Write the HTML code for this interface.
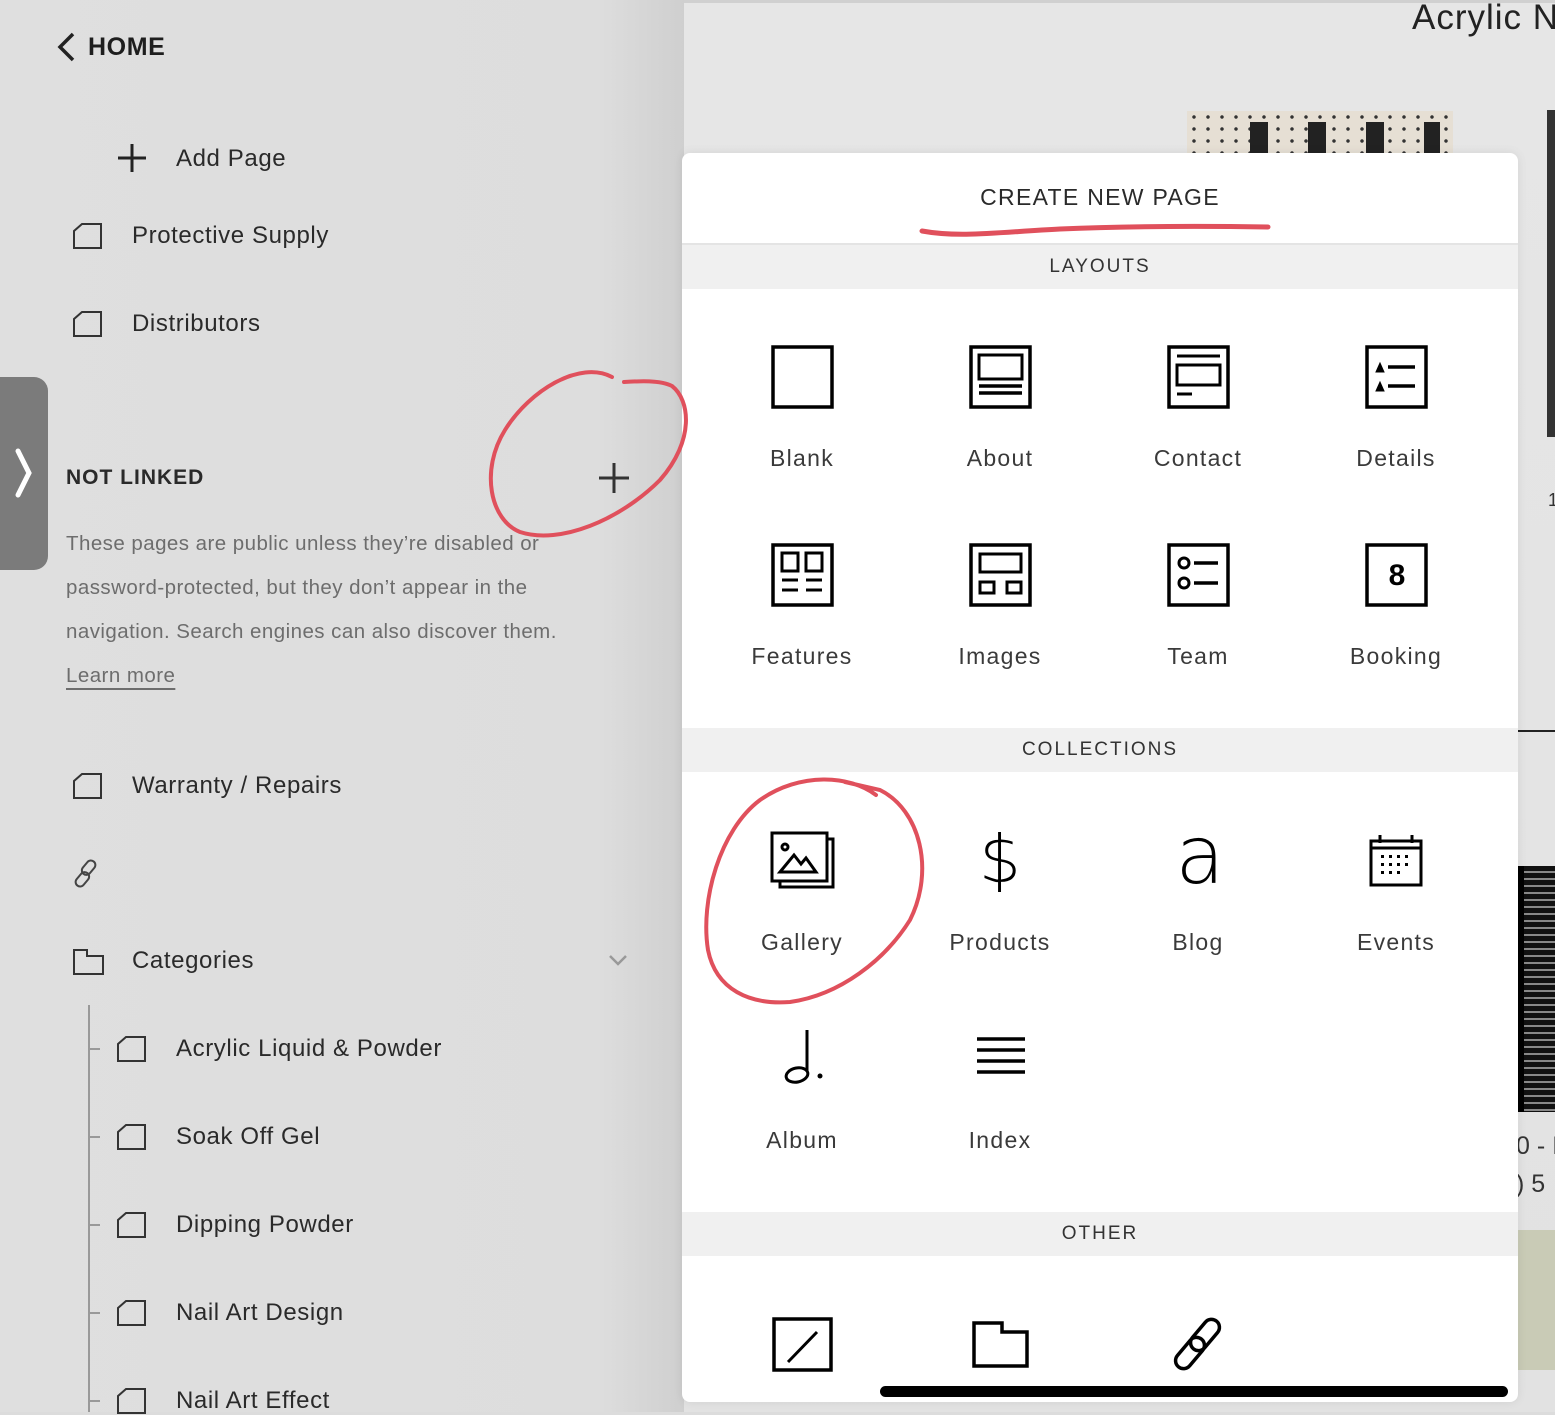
<!DOCTYPE html>
<html><head><meta charset="utf-8"><style>
*{margin:0;padding:0;box-sizing:border-box}
body{width:1555px;height:1412px;overflow:hidden;background:#dcdcdc;font-family:"Liberation Sans",sans-serif;position:relative}
.a{position:absolute}
.t{color:#2a2a2a;font-size:24px;letter-spacing:.6px}
.lbl{position:absolute;width:200px;text-align:center;font-size:23px;color:#3a3a3a;letter-spacing:1.3px}
.band{position:absolute;left:0;width:836px;height:44px;background:#f0f0f0;text-align:center;line-height:44px;font-size:19px;letter-spacing:2px;color:#333}
svg{position:absolute;overflow:visible}
</style></head><body>
<!-- left panel -->
<div class="a" style="left:0;top:0;width:684px;height:1412px;background:linear-gradient(90deg,#dfdfdf 0,#dddddd 88%,#cfcfcf 100%)"></div>
<svg style="left:55px;top:32px" width="20" height="30"><path d="M18 2 L5 15 L18 28" fill="none" stroke="#222" stroke-width="3.5"/></svg>
<div class="a" style="left:88px;top:33px;font-size:25px;font-weight:bold;color:#1e1e1e;letter-spacing:.6px">HOME</div>
<svg style="left:117px;top:143px" width="30" height="30"><path d="M15 1V29M1 15H29" stroke="#222" stroke-width="3"/></svg>
<div class="a t" style="left:176px;top:145px">Add Page</div>
<svg style="left:73px;top:222px" width="30" height="28"><path d="M1 26H28V2H9L1 9Z" fill="none" stroke="#333" stroke-width="2"/></svg>
<div class="a t" style="left:132px;top:222px">Protective Supply</div>
<svg style="left:73px;top:310px" width="30" height="28"><path d="M1 26H28V2H9L1 9Z" fill="none" stroke="#333" stroke-width="2"/></svg>
<div class="a t" style="left:132px;top:310px">Distributors</div>
<div class="a" style="left:0;top:377px;width:48px;height:193px;background:#7b7b7b;border-radius:0 14px 14px 0"></div>
<svg style="left:14px;top:448px" width="20" height="50"><path d="M4 3L15 25L4 47" fill="none" stroke="#fff" stroke-width="5" stroke-linecap="round"/></svg>
<div class="a" style="left:66px;top:466px;font-size:21px;font-weight:bold;color:#2a2a2a;letter-spacing:1px">NOT LINKED</div>
<svg style="left:598px;top:462px" width="32" height="32"><path d="M16 1V31M1 16H31" stroke="#333" stroke-width="3"/></svg>
<div class="a" style="left:66px;top:522px;width:620px;font-size:20.5px;line-height:44px;color:#6d6d6d;letter-spacing:.45px;white-space:nowrap">These pages are public unless they’re disabled or<br>password-protected, but they don’t appear in the<br>navigation. Search engines can also discover them.<br><span style="text-decoration:underline;text-underline-offset:6px">Learn more</span></div>
<svg style="left:73px;top:772px" width="30" height="28"><path d="M1 26H28V2H9L1 9Z" fill="none" stroke="#333" stroke-width="2"/></svg>
<div class="a t" style="left:132px;top:772px">Warranty / Repairs</div>
<svg style="left:74px;top:858px" width="30" height="32"><g fill="none" stroke="#444" stroke-width="2"><rect x="10" y="2" width="9" height="16" rx="4.5" transform="rotate(40 15 10)"/><rect x="4" y="13" width="9" height="16" rx="4.5" transform="rotate(40 8 21)"/></g></svg>
<svg style="left:73px;top:948px" width="32" height="28"><path d="M1 26H30V8H14V2H1Z" fill="none" stroke="#333" stroke-width="2"/></svg>
<div class="a t" style="left:132px;top:947px">Categories</div>
<svg style="left:608px;top:954px" width="20" height="14"><path d="M2 2L10 10L18 2" fill="none" stroke="#999" stroke-width="2.5"/></svg>
<div class="a" style="left:88px;top:1005px;width:2px;height:407px;background:#999"></div>
<div class="a" style="left:90px;top:1048px;width:10px;height:2px;background:#999"></div>
<div class="a" style="left:90px;top:1136px;width:10px;height:2px;background:#999"></div>
<div class="a" style="left:90px;top:1224px;width:10px;height:2px;background:#999"></div>
<div class="a" style="left:90px;top:1312px;width:10px;height:2px;background:#999"></div>
<div class="a" style="left:90px;top:1400px;width:10px;height:2px;background:#999"></div>
<svg style="left:117px;top:1035px" width="30" height="28"><path d="M1 26H28V2H9L1 9Z" fill="none" stroke="#333" stroke-width="2"/></svg>
<div class="a t" style="left:176px;top:1035px">Acrylic Liquid &amp; Powder</div>
<svg style="left:117px;top:1123px" width="30" height="28"><path d="M1 26H28V2H9L1 9Z" fill="none" stroke="#333" stroke-width="2"/></svg>
<div class="a t" style="left:176px;top:1123px">Soak Off Gel</div>
<svg style="left:117px;top:1211px" width="30" height="28"><path d="M1 26H28V2H9L1 9Z" fill="none" stroke="#333" stroke-width="2"/></svg>
<div class="a t" style="left:176px;top:1211px">Dipping Powder</div>
<svg style="left:117px;top:1299px" width="30" height="28"><path d="M1 26H28V2H9L1 9Z" fill="none" stroke="#333" stroke-width="2"/></svg>
<div class="a t" style="left:176px;top:1299px">Nail Art Design</div>
<svg style="left:117px;top:1387px" width="30" height="28"><path d="M1 26H28V2H9L1 9Z" fill="none" stroke="#333" stroke-width="2"/></svg>
<div class="a t" style="left:176px;top:1387px">Nail Art Effect</div>

<!-- right preview -->
<div class="a" style="left:684px;top:0;width:871px;height:1412px;background:linear-gradient(180deg,#e6e6e6 0,#e2e2e2 100%)"></div>
<div class="a" style="left:684px;top:0;width:871px;height:3px;background:#d0d0d0"></div>
<div class="a" style="left:1412px;top:-2px;font-size:35px;color:#222;white-space:nowrap;letter-spacing:1px">Acrylic N</div>
<div class="a" style="left:1187px;top:111px;width:266px;height:42px;background:radial-gradient(circle,#333 1.5px,transparent 2px) 0 0/14px 12px,#e6dfd4"></div>
<div class="a" style="left:1210px;top:122px;width:230px;height:31px;background:repeating-linear-gradient(90deg,transparent 0 40px,#222 40px 58px)"></div>
<div class="a" style="left:1547px;top:110px;width:8px;height:327px;background:#333"></div>
<div class="a" style="left:1518px;top:730px;width:37px;height:2px;background:#222"></div>
<div class="a" style="left:1518px;top:866px;width:37px;height:246px;background:repeating-linear-gradient(180deg,#111 0 5px,#888 5px 7px)"></div>
<div class="a" style="left:1518px;top:866px;width:6px;height:246px;background:#000"></div>
<div class="a" style="left:1516px;top:1132px;font-size:25px;color:#333;white-space:nowrap">0 - I</div>
<div class="a" style="left:1516px;top:1170px;font-size:25px;color:#333;white-space:nowrap">) 5</div>
<div class="a" style="left:1518px;top:1230px;width:37px;height:140px;background:#c9cbb6"></div>
<div class="a" style="left:1548px;top:490px;font-size:18px;color:#333">1</div>

<!-- modal -->
<div class="a" style="left:682px;top:153px;width:836px;height:1249px;background:#fff;border-radius:8px;box-shadow:0 0 10px rgba(0,0,0,.08);overflow:hidden">
<div class="a" style="left:0;top:31px;width:836px;text-align:center;font-size:23px;letter-spacing:1.3px;color:#2a2a2a">CREATE NEW PAGE</div>
<div class="a" style="left:0;top:90px;width:836px;height:2px;background:#e4e4e4"></div>
<div class="band" style="top:92px">LAYOUTS</div>
<div class="band" style="top:575px">COLLECTIONS</div>
<div class="band" style="top:1059px">OTHER</div>
<div class="a" style="left:198px;top:1233px;width:628px;height:11px;background:#000;border-radius:6px"></div>
</div>

<!-- layout icons -->
<svg style="left:771px;top:345px" width="64" height="64" fill="none" stroke="#000" stroke-width="3.5"><rect x="2" y="2" width="59" height="60"/></svg>
<svg style="left:969px;top:345px" width="64" height="64" fill="none" stroke="#000" stroke-width="3.5"><rect x="2" y="2" width="59" height="60"/><rect x="10" y="10" width="43" height="24" stroke-width="3"/><path d="M10 41H53M10 48H53" stroke-width="3.5"/></svg>
<svg style="left:1167px;top:345px" width="64" height="64" fill="none" stroke="#000" stroke-width="3.5"><rect x="2" y="2" width="59" height="60"/><path d="M10 11H53" stroke-width="3"/><rect x="10" y="20" width="43" height="20" stroke-width="3"/><path d="M10 49H25" stroke-width="3"/></svg>
<svg style="left:1365px;top:345px" width="64" height="64" fill="none" stroke="#000" stroke-width="3.5"><rect x="2" y="2" width="59" height="60"/><path d="M11 27L15 18L19 27Z M11 46L15 37L19 46Z" fill="#000" stroke-width="1"/><path d="M23 22H50M23 41H50" stroke-width="3.5"/></svg>
<svg style="left:771px;top:543px" width="64" height="64" fill="none" stroke="#000" stroke-width="3.5"><rect x="2" y="2" width="59" height="60"/><rect x="11" y="10" width="16" height="18" stroke-width="3"/><rect x="35" y="10" width="16" height="18" stroke-width="3"/><path d="M11 37H27M35 37H51M11 47H27M35 47H51" stroke-width="3"/></svg>
<svg style="left:969px;top:543px" width="64" height="64" fill="none" stroke="#000" stroke-width="3.5"><rect x="2" y="2" width="59" height="60"/><rect x="11" y="11" width="41" height="18" stroke-width="3"/><rect x="11" y="39" width="14" height="11" stroke-width="3"/><rect x="38" y="39" width="14" height="11" stroke-width="3"/></svg>
<svg style="left:1167px;top:543px" width="64" height="64" fill="none" stroke="#000" stroke-width="3.5"><rect x="2" y="2" width="59" height="60"/><circle cx="17" cy="20" r="5" stroke-width="3"/><circle cx="17" cy="40" r="5" stroke-width="3"/><path d="M27 20H51M27 40H51" stroke-width="3.5"/></svg>
<svg style="left:1365px;top:543px" width="64" height="64" fill="none" stroke="#000" stroke-width="3.5"><rect x="2" y="2" width="59" height="60"/><text x="32" y="42" text-anchor="middle" font-family="Liberation Sans" font-size="30" font-weight="bold" fill="#000" stroke="none">8</text></svg>
<div class="lbl" style="left:702px;top:445px">Blank</div>
<div class="lbl" style="left:900px;top:445px">About</div>
<div class="lbl" style="left:1098px;top:445px">Contact</div>
<div class="lbl" style="left:1296px;top:445px">Details</div>
<div class="lbl" style="left:702px;top:643px">Features</div>
<div class="lbl" style="left:900px;top:643px">Images</div>
<div class="lbl" style="left:1098px;top:643px">Team</div>
<div class="lbl" style="left:1296px;top:643px">Booking</div>

<!-- collection icons -->
<svg style="left:770px;top:831px" width="66" height="58" fill="none" stroke="#000" stroke-width="3"><path d="M57 8H63V56H10V50"/><rect x="2" y="2" width="55" height="48"/><circle cx="15" cy="16" r="3"/><path d="M10 41L24 24L31 33L36 27L46 41Z"/></svg>
<div class="a" style="left:970px;top:820px;width:60px;text-align:center;font-size:66px;font-family:'DejaVu Sans',sans-serif;font-weight:200;color:#000;line-height:80px">$</div>
<div class="a" style="left:1170px;top:806px;width:60px;text-align:center;font-size:80px;font-family:'DejaVu Sans',sans-serif;font-weight:200;color:#000;line-height:100px">a</div>
<svg style="left:1369px;top:833px" width="56" height="56" fill="none" stroke="#000" stroke-width="3"><rect x="2" y="8" width="50" height="44"/><path d="M2 15H52M11 2V10M43 2V10" /><g fill="#000" stroke="none"><rect x="12" y="22" width="3" height="3"/><rect x="20" y="22" width="3" height="3"/><rect x="28" y="22" width="3" height="3"/><rect x="36" y="22" width="3" height="3"/><rect x="12" y="30" width="3" height="3"/><rect x="20" y="30" width="3" height="3"/><rect x="28" y="30" width="3" height="3"/><rect x="36" y="30" width="3" height="3"/><rect x="12" y="38" width="3" height="3"/><rect x="20" y="38" width="3" height="3"/><rect x="28" y="38" width="3" height="3"/></g></svg>
<svg style="left:778px;top:1028px" width="50" height="58" fill="none" stroke="#000" stroke-width="3"><path d="M29 2V44"/><ellipse cx="19" cy="47" rx="11" ry="7" transform="rotate(-12 19 47)"/><circle cx="42" cy="48" r="2.5" fill="#000" stroke="none"/></svg>
<svg style="left:975px;top:1036px" width="52" height="44" stroke="#000" stroke-width="3.5"><path d="M2 3H50M2 14H50M2 25H50M2 36H50"/></svg>
<div class="lbl" style="left:702px;top:929px">Gallery</div>
<div class="lbl" style="left:900px;top:929px">Products</div>
<div class="lbl" style="left:1098px;top:929px">Blog</div>
<div class="lbl" style="left:1296px;top:929px">Events</div>
<div class="lbl" style="left:702px;top:1127px">Album</div>
<div class="lbl" style="left:900px;top:1127px">Index</div>

<!-- other icons -->
<svg style="left:772px;top:1317px" width="62" height="56" fill="none" stroke="#000" stroke-width="3.5"><rect x="2" y="2" width="57" height="51"/><path d="M16 45L45 15" stroke-width="3"/></svg>
<svg style="left:972px;top:1321px" width="58" height="48" fill="none" stroke="#000" stroke-width="3.5"><path d="M2 2H30V11H55V45H2Z"/></svg>
<svg style="left:1173px;top:1315px" width="52" height="58" fill="none" stroke="#000" stroke-width="3.5"><rect x="24" y="2" width="16" height="36" rx="8" transform="rotate(40 32 20)"/><rect x="9" y="20" width="16" height="36" rx="8" transform="rotate(40 17 38)"/></svg>

<!-- red annotations -->
<svg style="left:0;top:0" width="1555" height="1412" fill="none" stroke="#e0505c" stroke-linecap="round">
<path d="M922 231 C960 238 1000 232 1060 229 C1130 226 1200 226 1268 227" stroke-width="5"/>
<path d="M612 377 C580 360 530 390 505 430 C480 470 490 520 520 532 C560 545 620 520 660 480 C695 440 690 400 672 386 C660 380 640 381 624 382" stroke-width="4"/>
<path d="M876 795 C850 775 800 772 760 800 C720 830 700 900 708 950 C716 990 750 1005 790 1002 C840 995 885 960 910 920 C935 870 920 810 880 790 L845 782" stroke-width="4"/>
</svg>
</body></html>
